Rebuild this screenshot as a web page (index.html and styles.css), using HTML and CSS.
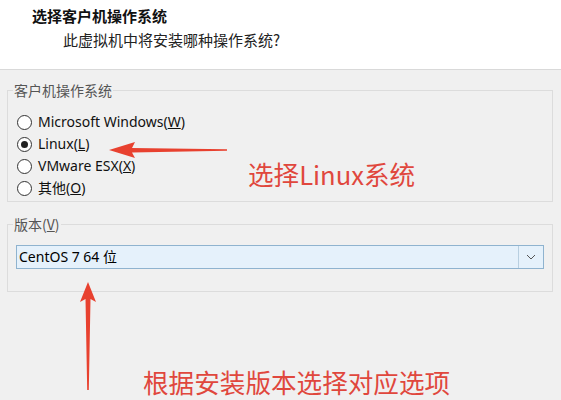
FILE: index.html
```html
<!DOCTYPE html>
<html lang="zh-CN">
<head>
<meta charset="utf-8">
<link rel="stylesheet" href="styles.css">
</head>
<body>
<div class="page">
  <header class="head">
    <div class="title">选择客户机操作系统</div>
    <div class="subtitle">此虚拟机中将安装哪种操作系统?</div>
  </header>
  <main class="body">
    <fieldset class="group group-os">
      <legend class="legend">客户机操作系统</legend>
      <div class="radios">
        <div class="radio"><span class="dot"></span><span class="rlabel">Microsoft Windows(<u>W</u>)</span></div>
        <div class="radio"><span class="dot checked"></span><span class="rlabel">Linux(<u>L</u>)</span></div>
        <div class="radio"><span class="dot"></span><span class="rlabel">VMware ESX(<u>X</u>)</span></div>
        <div class="radio"><span class="dot"></span><span class="rlabel">其他(<u>O</u>)</span></div>
      </div>
    </fieldset>
    <fieldset class="group group-ver">
      <legend class="legend">版本(<u>V</u>)</legend>
      <div class="select">
        <span class="select-text">CentOS 7 64 位</span>
        <span class="select-btn">
          <svg width="10" height="6" viewBox="0 0 10 6"><path d="M1 1 L5 5 L9 1" fill="none" stroke="#555" stroke-width="1"/></svg>
        </span>
      </div>
    </fieldset>
  </main>

  <svg class="arrow arrow-left" width="130" height="20" viewBox="0 0 130 20">
    <path d="M0 10 L26 2 L23 8 L118 9.3 L118 10.7 L23 12.5 L26 18 Z" fill="#e8412f"/>
  </svg>
  <div class="note note-1">选择Linux系统</div>

  <svg class="arrow arrow-up" width="20" height="112" viewBox="0 0 20 112">
    <path d="M10 0 L18 20 L12.5 17 L10.8 108 L9.2 108 L7.5 17 L2 20 Z" fill="#e8412f"/>
  </svg>
  <div class="note note-2">根据安装版本选择对应选项</div>
</div>
</body>
</html>
```

FILE: styles.css
```css
html, body {
  margin: 0;
  padding: 0;
}
body {
  background: #f0f0f0;
  font-family: "Noto Sans", "Noto Sans CJK SC", sans-serif;
  color: #1a1a1a;
}
.page {
  position: relative;
  width: 561px;
  height: 400px;
  overflow: hidden;
}
.head {
  background: #ffffff;
  height: 70px;
  border-bottom: 1px solid #d9d9d9;
  padding: 5px 0 0 32px;
  box-sizing: border-box;
}
.title {
  font-family: "Noto Sans CJK SC", sans-serif;
  font-weight: 700;
  font-size: 15px;
  line-height: 22px;
  color: #111;
}
.subtitle {
  font-family: "Noto Sans CJK SC", sans-serif;
  font-size: 15px;
  line-height: 22px;
  margin-left: 31px;
  margin-top: 2px;
  color: #222;
}
.body {
  padding: 10px 8px 0 7px;
  display: flex;
  flex-direction: column;
  gap: 12px;
}
.group {
  margin: 0;
  padding: 0;
  border: 1px solid #dcdcdc;
  min-width: 0;
}
.legend {
  margin-left: 5px;
  padding: 0 1px;
  font-family: "Noto Sans CJK SC", sans-serif;
  font-size: 14px;
  line-height: 20px;
  color: #555;
}
.group-os {
  height: 122px;
  box-sizing: border-box;
}
.radios {
  padding: 11px 0 0 9px;
  display: flex;
  flex-direction: column;
}
.radio {
  display: flex;
  align-items: center;
  height: 22px;
  gap: 6px;
}
.dot {
  width: 13px;
  height: 13px;
  border: 1px solid #333;
  border-radius: 50%;
  background: #fff;
  box-sizing: content-box;
  position: relative;
  flex: none;
}
.dot.checked::after {
  content: "";
  position: absolute;
  left: 3px;
  top: 3px;
  width: 7px;
  height: 7px;
  border-radius: 50%;
  background: #222;
}
.rlabel {
  font-family: "Noto Sans", "Noto Sans CJK SC", sans-serif;
  font-size: 14px;
  line-height: 22px;
  color: #111;
}
.group-ver {
  height: 78px;
  box-sizing: border-box;
}
.select {
  margin: 11px 8px 0 8px;
  height: 24px;
  box-sizing: border-box;
  border: 1px solid #8fb3cf;
  background: #e5f1fb;
  display: flex;
  align-items: stretch;
}
.select-text {
  flex: 1;
  font-family: "Noto Sans", "Noto Sans CJK SC", sans-serif;
  font-size: 14px;
  line-height: 22px;
  padding-left: 2px;
  color: #000;
}
.select-btn {
  width: 24px;
  border-left: 1px solid #b8cfe0;
  display: flex;
  align-items: center;
  justify-content: center;
}
.arrow {
  position: absolute;
}
.arrow-left {
  left: 109px;
  top: 140px;
}
.arrow-up {
  left: 78px;
  top: 282px;
}
.note {
  position: absolute;
  font-family: "Noto Sans CJK SC", sans-serif;
  font-size: 25.6px;
  line-height: 30px;
  color: #e0473d;
  white-space: nowrap;
}
.note-1 {
  left: 248px;
  top: 159px;
}
.note-2 {
  left: 143px;
  top: 367px;
}
```
